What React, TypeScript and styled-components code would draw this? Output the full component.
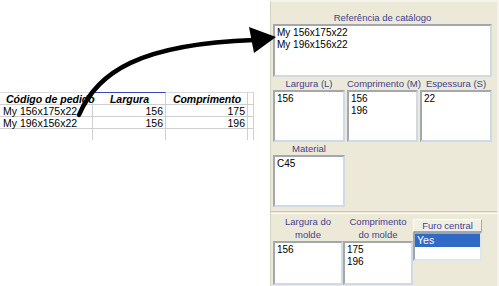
import { Fragment } from "react";
import styled, { createGlobalStyle } from "styled-components";

const GlobalStyle = createGlobalStyle`
    html, body {
        margin: 0;
        padding: 0;
        background: #ffffff;
    }
    body {
        font-family: "Liberation Sans", Arial, sans-serif;
    }
`;

const Page = styled.div`
    position: relative;
    width: 499px;
    height: 286px;
    display: flex;
    overflow: hidden;
`;

const Sheet = styled.div`
    width: 270px;
    padding-top: 92px;
    box-sizing: border-box;
`;

const Grid = styled.div`
    display: grid;
    grid-template-columns: 93px 73px 82px 5px;
    font-size: 10.5px;
    color: #000;
`;

const Cell = styled.div<{ $head?: boolean; $num?: boolean; $blue?: boolean; $last?: boolean }>`
    height: ${p => (p.$head ? 13 : p.$last ? 11 : 12)}px;
    line-height: ${p => (p.$head ? 13 : 12)}px;
    box-sizing: border-box;
    padding: 0 2px 0 3px;
    border-right: 1px solid #cfcfcf;
    border-bottom: ${p => (p.$last ? "none" : "1px solid #cfcfcf")};
    border-top: ${p => (p.$head ? `1px solid ${p.$blue ? "#3d44b8" : "#dadada"}` : "none")};
    font-weight: ${p => (p.$head ? "bold" : "normal")};
    font-style: ${p => (p.$head ? "italic" : "normal")};
    text-align: ${p => (p.$num ? "right" : p.$head ? "center" : "left")};
    white-space: nowrap;
    overflow: visible;
`;

const HeadLeft = styled(Cell)`
    text-align: left;
    padding-left: 6px;
`;

const Panel = styled.div`
    width: 229px;
    height: 286px;
    box-sizing: border-box;
    background: #ece9d8;
    border-left: 1px solid #d5d1bf;
    border-top: 2px solid #f5f3ea;
    border-right: 2px solid #f5f3ea;
    padding: 9px 0 0 2px;
    display: flex;
    flex-direction: column;
    font-size: 10px;
`;

const Field = styled.div<{ $w: number }>`
    width: ${p => p.$w}px;
    display: flex;
    flex-direction: column;
`;

const Label = styled.div`
    height: 13px;
    line-height: 13px;
    text-align: center;
    color: #41418f;
    font-size: 9.5px;
    white-space: nowrap;
`;

const TwoLineLabel = styled(Label)`
    height: 27px;
    padding-top: 1px;
    box-sizing: border-box;
`;

const ListBox = styled.div<{ $h: number }>`
    height: ${p => p.$h}px;
    box-sizing: border-box;
    background: #ffffff;
    border-style: solid;
    border-width: 2px;
    border-color: #a4a8ac #cfdae4 #cfdae4 #a4a8ac;
    padding: 1px 2px;
    line-height: 12px;
    color: #000;
`;

const Row = styled.div<{ $gap: number }>`
    display: flex;
    gap: ${p => p.$gap}px;
`;

const Separator = styled.div`
    margin: 4px 0 0 -2px;
    height: 1px;
    border-top: 1px solid #c9c5b2;
    border-bottom: 1px solid #faf9f3;
`;

const ColumnHeader = styled.div`
    margin-top: 5px;
    height: 13px;
    line-height: 12px;
    box-sizing: border-box;
    background: #f2f0e6;
    border-style: solid;
    border-width: 1px;
    border-color: #ffffff #aca899 #aca899 #ffffff;
    text-align: center;
    color: #41418f;
    font-size: 9.5px;
`;

const SmallList = styled(ListBox)`
    padding: 0;
    border-color: #9da5ae #dfe5ec #dfe5ec #9da5ae;
`;

const Selected = styled.div`
    height: 13px;
    line-height: 13px;
    background: #316ac5;
    color: #ffffff;
    padding-left: 2px;
    font-size: 10.5px;
`;

const Arrow = styled.svg`
    position: absolute;
    left: 0;
    top: 0;
    pointer-events: none;
`;

const orders = [
    { code: "My 156x175x22", width: 156, length: 175 },
    { code: "My 196x156x22", width: 156, length: 196 },
];

export default function App() {
    return (
        <Page>
            <GlobalStyle />
            <Sheet>
                <Grid>
                    <HeadLeft $head>Código de pedido</HeadLeft>
                    <Cell $head $blue>Largura</Cell>
                    <Cell $head>Comprimento</Cell>
                    <Cell $head></Cell>
                    {orders.map(o => (
                        <Fragment key={o.code}>
                            <Cell>{o.code}</Cell>
                            <Cell $num>{o.width}</Cell>
                            <Cell $num>{o.length}</Cell>
                            <Cell></Cell>
                        </Fragment>
                    ))}
                    <Cell $last></Cell>
                    <Cell $last></Cell>
                    <Cell $last></Cell>
                    <Cell $last></Cell>
                </Grid>
            </Sheet>

            <Panel>
                <Field $w={219}>
                    <Label>Referência de catálogo</Label>
                    <ListBox $h={53}>
                        <div>My 156x175x22</div>
                        <div>My 196x156x22</div>
                    </ListBox>
                </Field>

                <Row $gap={2}>
                    <Field $w={72}>
                        <Label>Largura (L)</Label>
                        <ListBox $h={52}>156</ListBox>
                    </Field>
                    <Field $w={71}>
                        <Label>Comprimento (M)</Label>
                        <ListBox $h={52}>
                            <div>156</div>
                            <div>196</div>
                        </ListBox>
                    </Field>
                    <Field $w={72}>
                        <Label>Espessura (S)</Label>
                        <ListBox $h={52}>22</ListBox>
                    </Field>
                </Row>

                <Field $w={72}>
                    <Label>Material</Label>
                    <ListBox $h={52}>C45</ListBox>
                </Field>

                <Separator />

                <Row $gap={0}>
                    <Field $w={70}>
                        <TwoLineLabel>Largura do<br />molde</TwoLineLabel>
                        <ListBox $h={44}>156</ListBox>
                    </Field>
                    <Field $w={70}>
                        <TwoLineLabel>Comprimento<br />do molde</TwoLineLabel>
                        <ListBox $h={44}>
                            <div>175</div>
                            <div>196</div>
                        </ListBox>
                    </Field>
                    <Field $w={69}>
                        <ColumnHeader>Furo central</ColumnHeader>
                        <SmallList $h={29}>
                            <Selected>Yes</Selected>
                        </SmallList>
                    </Field>
                </Row>
            </Panel>

            <Arrow width={499} height={286} viewBox="0 0 499 286">
                <path d="M79 115 C 97 72, 140 44, 254 40" fill="none" stroke="#000" strokeWidth={4.5} strokeLinecap="round" />
                <polygon points="276,37 249,27 254,53" fill="#000" />
            </Arrow>
        </Page>
    );
}
